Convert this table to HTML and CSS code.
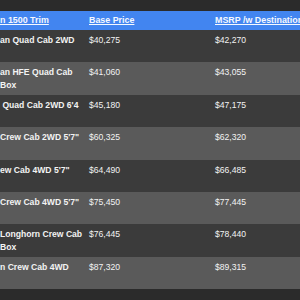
FILE: index.html
```html
<!DOCTYPE html>
<html>
<head>
<meta charset="utf-8">
<link rel="stylesheet" href="styles.css">
</head>
<body>
<div class="page">
  <table class="prices">
    <colgroup>
      <col class="c-trim">
      <col class="c-base">
      <col class="c-msrp">
    </colgroup>
    <thead>
      <tr><th><a href="#">n 1500 Trim</a></th><th><a href="#">Base Price</a></th><th><a href="#">MSRP /w Destination</a></th></tr>
    </thead>
    <tbody>
      <tr><td>an Quad Cab 2WD</td><td>$40,275</td><td>$42,270</td></tr>
      <tr><td>an HFE Quad Cab Box</td><td>$41,060</td><td>$43,055</td></tr>
      <tr><td>&nbsp;Quad Cab 2WD 6'4</td><td>$45,180</td><td>$47,175</td></tr>
      <tr><td>Crew Cab 2WD 5'7"</td><td>$60,325</td><td>$62,320</td></tr>
      <tr><td>ew Cab 4WD 5'7"</td><td>$64,490</td><td>$66,485</td></tr>
      <tr><td>Crew Cab 4WD 5'7"</td><td>$75,450</td><td>$77,445</td></tr>
      <tr><td>Longhorn Crew Cab Box</td><td>$76,445</td><td>$78,440</td></tr>
      <tr><td>n Crew Cab 4WD</td><td>$87,320</td><td>$89,315</td></tr>
    </tbody>
  </table>
</div>
</body>
</html>
```
FILE: styles.css
```css
html, body {
  margin: 0;
  padding: 0;
  background: #2b2b2b;
  overflow: hidden;
}
.page {
  padding-top: 11px;
  width: 300px;
  height: 300px;
  overflow: hidden;
  box-sizing: border-box;
}
.prices {
  border-collapse: collapse;
  table-layout: fixed;
  width: 360px;
  font-family: "Liberation Sans", Arial, sans-serif;
  font-size: 8.6px;
  line-height: 13px;
  color: #f3f3f3;
}
.c-trim { width: 89px; }
.c-base { width: 126px; }
.c-msrp { width: 145px; }
.prices th {
  background: #4285f0;
  text-align: left;
  font-weight: bold;
  font-size: 8.9px;
  padding: 3px 4px 3px 0;
  height: 13px;
  white-space: nowrap;
  overflow: hidden;
}
.prices th a {
  color: #f6f9ff;
  text-decoration: underline;
}
.prices td {
  vertical-align: top;
  padding: 4px 3px 0 0;
  text-align: left;
}
.prices td:first-child {
  font-weight: bold;
}
.prices tbody tr {
  height: 32.4px;
}
.prices tbody tr:nth-child(odd) {
  background: #3b3b3b;
}
.prices tbody tr:nth-child(even) {
  background: #5a5a5a;
}
```
